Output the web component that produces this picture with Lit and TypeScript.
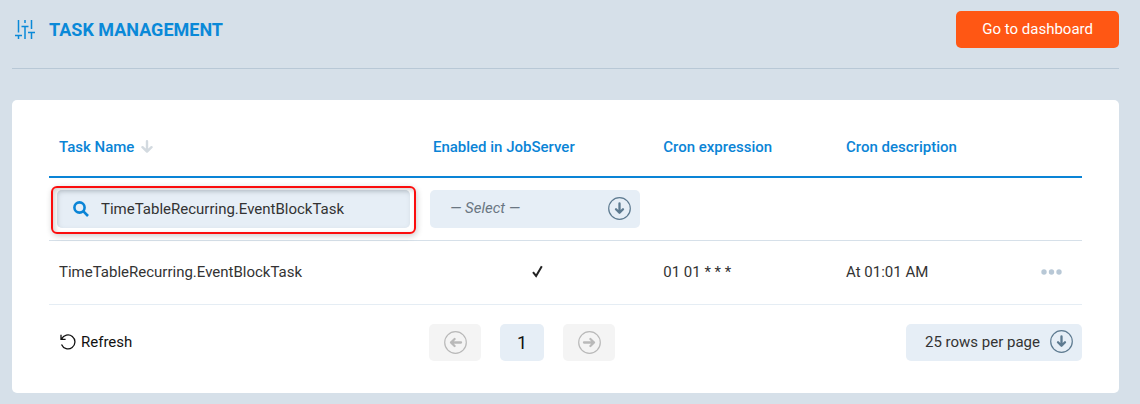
import { LitElement, html, css, svg } from "lit";
import { customElement, property, state } from "lit/decorators.js";

interface Task {
  name: string;
  enabled: boolean;
  cron: string;
  description: string;
}

const arrowPaths = {
  down: "M11.5 6.5v9M8 12.2l3.5 3.6 3.5-3.6",
  left: "M17 11.5H7M10.6 8L7 11.5l3.6 3.5",
  right: "M6 11.5h10M12.4 8l3.6 3.5-3.6 3.5",
};

@customElement("circle-arrow")
export class CircleArrow extends LitElement {
  @property() direction: keyof typeof arrowPaths = "down";

  static styles = css`
    :host {
      display: block;
      width: 23px;
      height: 23px;
      pointer-events: none;
    }
    svg {
      display: block;
    }
  `;

  render() {
    return html`<svg width="23" height="23" viewBox="0 0 23 23" fill="none" stroke="currentColor" aria-hidden="true">
      <circle cx="11.5" cy="11.5" r="10.8" stroke-width="1.2" />
      ${svg`<path d=${arrowPaths[this.direction]} stroke-width="2.3" stroke-linecap="round" stroke-linejoin="round" />`}
    </svg>`;
  }
}

@customElement("app-root")
export class AppRoot extends LitElement {
  @state() private tasks: Task[] = [
    {
      name: "TimeTableRecurring.EventBlockTask",
      enabled: true,
      cron: "01 01 * * *",
      description: "At 01:01 AM",
    },
  ];
  @state() private filter = "TimeTableRecurring.EventBlockTask";

  static styles = css`
    :host {
      display: block;
      box-sizing: border-box;
      min-height: 100vh;
      padding: 0 21px 11px 12px;
      background: #d6e0e9;
      color: #333;
      font: 400 15px/20px Roboto, sans-serif;
    }
    *,
    *::before {
      box-sizing: border-box;
    }
    svg {
      display: block;
      flex: none;
    }
    button,
    input,
    select {
      margin: 0;
      border: 0;
      font: inherit;
      color: inherit;
    }
    button {
      padding: 0;
      background: none;
      cursor: pointer;
    }
    .header {
      display: flex;
      align-items: center;
      justify-content: space-between;
      padding: 11px 0 20px;
      border-bottom: 1px solid #b8c8d6;
    }
    .title {
      display: flex;
      align-items: center;
      gap: 14px;
      margin: 0;
      padding-left: 3px;
      color: #0a89d8;
      font-size: 18px;
      font-weight: 700;
      line-height: 24px;
    }
    .primary {
      height: 37px;
      padding: 0 26px 2px;
      border-radius: 5px;
      background: #ff5714;
      color: #fff;
      font-size: 15px;
      font-weight: 400;
    }
    .card {
      margin-top: 31px;
      padding: 17px 37px 32px;
      border-radius: 5px;
      background: #fff;
    }
    .tasks {
      width: 100%;
      border-collapse: separate;
      border-spacing: 0;
      table-layout: fixed;
    }
    .col-name {
      width: 36.1%;
    }
    .col-enabled {
      width: 22.3%;
    }
    .col-cron {
      width: 17.7%;
    }
    .col-menu {
      width: 60px;
    }
    th {
      height: 61px;
      padding: 0 11px;
      border-bottom: 2px solid #0a84d6;
      color: #0a84d6;
      font-weight: 500;
      text-align: left;
    }
    td {
      height: 64px;
      padding: 0 11px 2px;
      border-bottom: 1px solid #e5edf4;
    }
    th:first-child,
    td:first-child {
      padding-left: 10px;
    }
    .filters td {
      height: 63px;
      padding: 0 12px 0 8px;
      border-bottom-color: #d6e0e9;
    }
    .sortable {
      display: flex;
      align-items: center;
      gap: 7px;
    }
    .search {
      position: relative;
      display: flex;
      align-items: center;
      gap: 12px;
      height: 38px;
      padding: 0 16px;
      border-radius: 5px;
      background: #e6eef6;
      box-shadow: inset 1px 2px 5px #ccd6df;
    }
    .search::before {
      content: "";
      position: absolute;
      inset: -4px -6px -6px;
      border: 2px solid #fb0d0d;
      border-radius: 6px;
      box-shadow: 1px 2px 6px rgba(0, 0, 0, 0.2), inset 2px 2px 5px rgba(0, 0, 0, 0.18);
      pointer-events: none;
    }
    .search input {
      flex: 1;
      min-width: 0;
      padding: 0;
      background: none;
      outline: 0;
    }
    .picker {
      display: grid;
      align-items: center;
      border-radius: 5px;
      background: #e6eef6;
      color: #5d7a90;
    }
    .picker > * {
      grid-area: 1 / 1;
    }
    .picker select {
      width: 100%;
      height: 38px;
      padding: 0 44px 2px 20px;
      appearance: none;
      background: none;
      color: #6a7682;
      font-style: italic;
    }
    .picker circle-arrow {
      justify-self: end;
      margin: 0 9px 2px 0;
    }
    .picker.rows select {
      height: 37px;
      padding: 0 42px 2px 19px;
      color: #333;
      font-style: normal;
    }
    .check {
      margin: 0 auto;
    }
    .menu {
      display: flex;
      margin-left: auto;
      padding: 6px 0;
      color: #b8c8d6;
    }
    td.actions {
      padding-right: 20px;
    }
    .footer {
      display: grid;
      grid-template-columns: 36.8% auto 1fr;
      align-items: center;
      margin-top: 19px;
    }
    .refresh {
      display: flex;
      align-items: center;
      justify-self: start;
      gap: 5px;
      margin-left: 11px;
      padding-bottom: 2px;
      color: #111;
    }
    .pages {
      display: flex;
      gap: 19px;
    }
    .page {
      display: flex;
      align-items: center;
      justify-content: center;
      width: 52px;
      height: 37px;
      border-radius: 5px;
      background: #f4f4f4;
      color: #b9b9b9;
    }
    .page.current {
      width: 44px;
      background: #e6eef6;
      color: #111;
      font-size: 18px;
    }
    .rows {
      justify-self: end;
    }
  `;

  private onFilter(e: Event) {
    this.filter = (e.target as HTMLInputElement).value;
  }

  render() {
    const rows = this.tasks.filter((t) => t.name.toLowerCase().includes(this.filter.toLowerCase()));
    return html`
      <header class="header">
        <h1 class="title">
          <svg width="20" height="20" viewBox="0 0 20 20" fill="none" stroke="currentColor" stroke-width="1.5" aria-hidden="true">
            <path d="M3.5 0v12.5M0 15.5h7M3.5 15.5V19M10 0v3M6.5 6.5h7M10 6.5V19M16.5 0v9M13 12.5h7M16.5 12.5V19" />
          </svg>
          TASK MANAGEMENT
        </h1>
        <button class="primary">Go to dashboard</button>
      </header>
      <main class="card">
        <table class="tasks">
          <colgroup>
            <col class="col-name" />
            <col class="col-enabled" />
            <col class="col-cron" />
            <col />
            <col class="col-menu" />
          </colgroup>
          <thead>
            <tr>
              <th aria-sort="descending">
                <span class="sortable">
                  Task Name
                  <svg width="12" height="13" viewBox="0 0 12 13" fill="none" stroke="#d3dae0" stroke-width="2.4" stroke-linecap="round" stroke-linejoin="round" aria-hidden="true">
                    <path d="M6 1.3v10M1.5 7.2L6 11.6l4.5-4.4" />
                  </svg>
                </span>
              </th>
              <th>Enabled in JobServer</th>
              <th>Cron expression</th>
              <th>Cron description</th>
              <th aria-label="Actions"></th>
            </tr>
          </thead>
          <tbody>
            <tr class="filters">
              <td>
                <label class="search">
                  <svg width="16" height="16" viewBox="0 0 16 16" fill="none" stroke="#0a84d6" stroke-width="2.6" aria-hidden="true">
                    <circle cx="6.5" cy="6.5" r="5.1" />
                    <path d="M10.2 10.2l4.8 4.8" />
                  </svg>
                  <input type="text" aria-label="Task Name" .value=${this.filter} @input=${this.onFilter} />
                </label>
              </td>
              <td>
                <div class="picker">
                  <select aria-label="Enabled in JobServer">
                    <option>— Select —</option>
                    <option>Yes</option>
                    <option>No</option>
                  </select>
                  <circle-arrow></circle-arrow>
                </div>
              </td>
              <td></td>
              <td></td>
              <td></td>
            </tr>
            ${rows.map(
              (t) => html`<tr>
                <td>${t.name}</td>
                <td>
                  ${t.enabled
                    ? html`<svg class="check" width="12" height="13" viewBox="0 0 12 13" fill="none" stroke="#222" stroke-width="2" role="img" aria-label="Enabled">
                        <path d="M2 7.2L5.1 11 10.8 1.2" />
                      </svg>`
                    : ""}
                </td>
                <td>${t.cron}</td>
                <td>${t.description}</td>
                <td class="actions">
                  <button class="menu" aria-label="Row actions">
                    <svg width="21" height="6" viewBox="0 0 21 6" fill="currentColor" aria-hidden="true">
                      <circle cx="3" cy="3" r="2.7" />
                      <circle cx="10.5" cy="3" r="2.7" />
                      <circle cx="18" cy="3" r="2.7" />
                    </svg>
                  </button>
                </td>
              </tr>`
            )}
          </tbody>
        </table>
        <footer class="footer">
          <button class="refresh">
            <svg width="16" height="16" viewBox="0 0 16 16" fill="none" stroke="currentColor" stroke-width="1.3" aria-hidden="true">
              <path d="M1.6 4.9A7 7 0 1 1 1.5 10.6M1 .8v4.5h4.6" />
            </svg>
            Refresh
          </button>
          <nav class="pages" aria-label="Pages">
            <button class="page" aria-label="Previous page" disabled>
              <circle-arrow direction="left"></circle-arrow>
            </button>
            <button class="page current" aria-current="page">1</button>
            <button class="page" aria-label="Next page" disabled>
              <circle-arrow direction="right"></circle-arrow>
            </button>
          </nav>
          <div class="picker rows">
            <select aria-label="Rows per page">
              <option>25 rows per page</option>
            </select>
            <circle-arrow></circle-arrow>
          </div>
        </footer>
      </main>
    `;
  }
}
